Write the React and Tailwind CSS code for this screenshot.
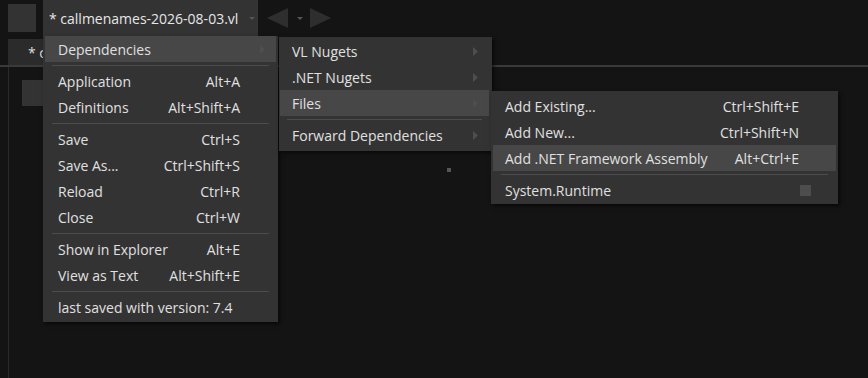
import React from 'react';

const font = { fontFamily: '"Open Sans", "Noto Sans", sans-serif' };

const Arrow = () => (
  <svg width="5" height="9" viewBox="0 0 5 9" className="shrink-0">
    <path d="M0 0 L5 4.5 L0 9 Z" fill="#4e4e4e" />
  </svg>
);

const Separator = ({ className }) => (
  <div className="h-[6px] flex items-center">
    <div className={`h-px w-full bg-[#4c4c4c] ${className}`} />
  </div>
);

const Item = ({ label, shortcut, active, arrow, check, inset = 'px-[2px]', pad = 'pl-[13px] pr-[36px]' }) => (
  <div className={`h-[26px] flex ${inset}`}>
    <div
      className={`flex-1 flex items-center justify-between ${pad} ${
        active ? 'bg-[#474747]' : ''
      }`}
    >
      <span className="text-[14px] text-[#e0e0e0] whitespace-nowrap">{label}</span>
      {shortcut && <span className="text-[14px] text-[#e0e0e0] whitespace-nowrap">{shortcut}</span>}
      {arrow && <Arrow />}
      {check && <span className="w-[11px] h-[11px] bg-[#4d4d4d] -mr-[12px]" />}
    </div>
  </div>
);

export default function App() {
  return (
    <div className="relative w-[868px] h-[378px] bg-[#141414] overflow-hidden select-none" style={font}>
      {/* top bar */}
      <div className="h-9 flex items-start">
        <div className="ml-2 mt-1 w-7 h-7 bg-[#333333]" />
        <div className="ml-[7px] w-[215px] h-9 bg-[#333333] flex items-center pl-[6px]">
          <span className="text-[14px] text-[#e6e6e6] whitespace-nowrap">* callmenames-2026-08-03.vl</span>
          <svg width="6" height="3" viewBox="0 0 6 3" className="ml-auto mr-[3px]">
            <path d="M0 0 L6 0 L3 3 Z" fill="#555555" />
          </svg>
        </div>
        <div className="h-9 flex items-center pl-[9px]">
          <svg width="21" height="20" viewBox="0 0 21 20">
            <path d="M21 0 L21 20 L0 10 Z" fill="#2e2e2e" />
          </svg>
          <svg width="6" height="3" viewBox="0 0 6 3" className="ml-[9px]">
            <path d="M0 0 L6 0 L3 3 Z" fill="#555555" />
          </svg>
          <svg width="21" height="20" viewBox="0 0 21 20" className="ml-[7px]">
            <path d="M0 0 L0 20 L21 10 Z" fill="#2e2e2e" />
          </svg>
        </div>
      </div>

      {/* document tabs */}
      <div className="h-[31px] flex flex-col">
        <div className="flex-1 flex items-end pl-2">
          <div className="w-[90px] h-[26px] bg-[#2b2b2b] flex items-center pl-5">
            <span className="text-[14px] text-[#dedede]">* c</span>
          </div>
        </div>
        <div className="h-[2px] bg-[#3a3a3a]" />
      </div>

      {/* canvas */}
      <div className="ml-2 h-[311px] border-l border-[#2a2a2a] pt-[13px] pl-[13px]">
        <div className="w-[60px] h-[26px] bg-[#333333]" />
      </div>
      <div className="absolute left-[447px] top-[168px] w-1 h-1 bg-[#555555]" />

      {/* main menu */}
      <div className="absolute left-[43px] top-[36px] w-[235px] bg-[#333333] pb-[2px] shadow-[2px_2px_4px_rgba(0,0,0,0.6)]">
        <Item label="Dependencies" active arrow pad="pl-[13px] pr-[11px]" />
        <div className="px-[9px]"><Separator /></div>
        <Item label="Application" shortcut="Alt+A" />
        <Item label="Definitions" shortcut="Alt+Shift+A" />
        <div className="px-[9px]"><Separator /></div>
        <Item label="Save" shortcut="Ctrl+S" />
        <Item label="Save As..." shortcut="Ctrl+Shift+S" />
        <Item label="Reload" shortcut="Ctrl+R" />
        <Item label="Close" shortcut="Ctrl+W" />
        <div className="px-[9px]"><Separator /></div>
        <Item label="Show in Explorer" shortcut="Alt+E" />
        <Item label="View as Text" shortcut="Alt+Shift+E" />
        <div className="px-[9px]"><Separator /></div>
        <Item label="last saved with version: 7.4" />
      </div>

      {/* dependencies submenu */}
      <div className="absolute left-[279px] top-[37px] w-[213px] bg-[#333333] pt-px pb-[3px] shadow-[2px_2px_4px_rgba(0,0,0,0.6)]">
        <Item label="VL Nugets" arrow inset="pl-px pr-[3px]" pad="pl-[12px] pr-[11px]" />
        <Item label=".NET Nugets" arrow inset="pl-px pr-[3px]" pad="pl-[12px] pr-[11px]" />
        <Item label="Files" active arrow inset="pl-px pr-[3px]" pad="pl-[12px] pr-[11px]" />
        <div className="pl-[8px] pr-[10px]"><Separator /></div>
        <Item label="Forward Dependencies" arrow inset="pl-px pr-[3px]" pad="pl-[12px] pr-[11px]" />
      </div>

      {/* files submenu */}
      <div className="absolute left-[491px] top-[91px] w-[347px] bg-[#333333] pt-[2px] pb-px shadow-[2px_2px_4px_rgba(0,0,0,0.6)]">
        <Item label="Add Existing..." shortcut="Ctrl+Shift+E" inset="px-[2px]" pad="pl-[12px] pr-[37px]" />
        <Item label="Add New..." shortcut="Ctrl+Shift+N" inset="px-[2px]" pad="pl-[12px] pr-[37px]" />
        <Item label="Add .NET Framework Assembly" shortcut="Alt+Ctrl+E" active inset="px-[2px]" pad="pl-[12px] pr-[37px]" />
        <div className="px-[10px]"><Separator /></div>
        <Item label="System.Runtime" check inset="px-[2px]" pad="pl-[12px] pr-[37px]" />
      </div>
    </div>
  );
}
